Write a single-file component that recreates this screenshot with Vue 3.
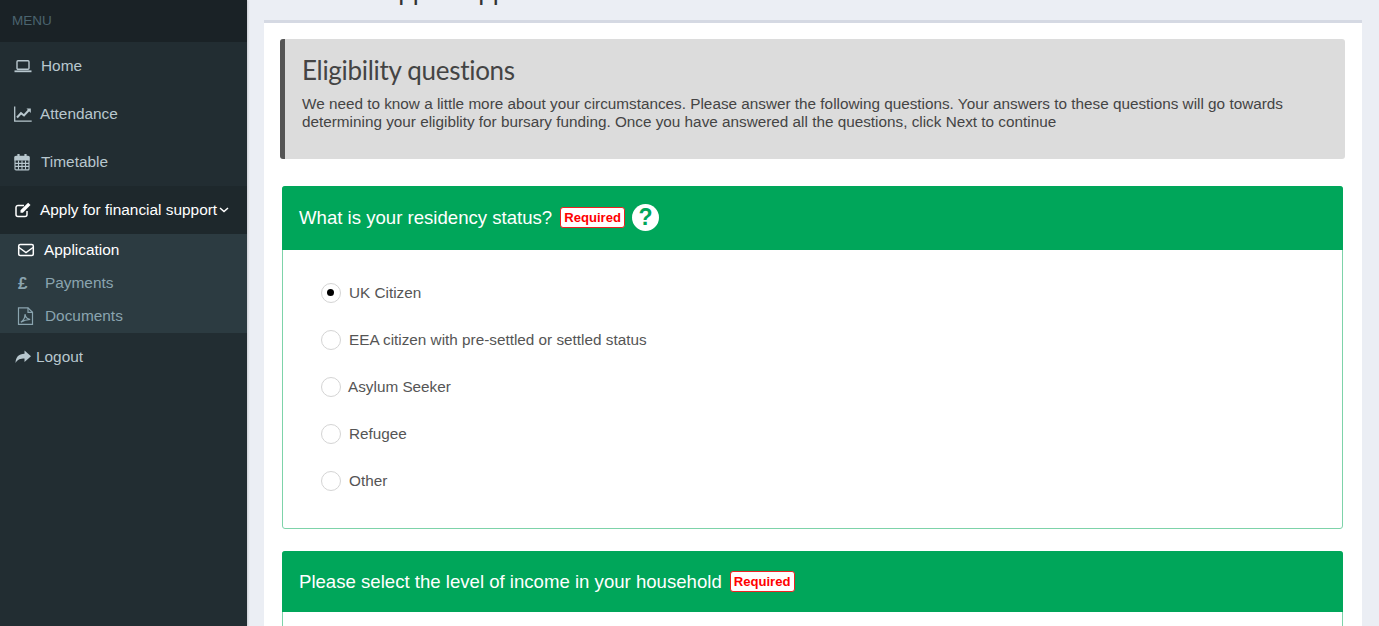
<script setup>
const menu = [
  { label: "Home", icon: "laptop" },
  { label: "Attendance", icon: "chart" },
  { label: "Timetable", icon: "calendar" },
];
const submenu = [
  { label: "Application", icon: "envelope", active: true },
  { label: "Payments", icon: "pound" },
  { label: "Documents", icon: "pdf" },
];
const options = [
  "UK Citizen",
  "EEA citizen with pre-settled or settled status",
  "Asylum Seeker",
  "Refugee",
  "Other",
];
</script>

<template>
  <div class="page">
    <aside class="sidebar">
      <div class="menu-title">MENU</div>
      <a v-for="item in menu" :key="item.label" class="item" :class="item.icon">
        <svg class="icon" viewBox="0 0 18 18">
          <g v-if="item.icon === 'laptop'" fill="none" stroke="currentColor" stroke-width="1.4">
            <rect x="3" y="3.7" width="12" height="8.6" rx="1" />
            <path d="M0.5 14.3h17" stroke-width="1.8" />
          </g>
          <g v-else-if="item.icon === 'chart'" fill="none" stroke="currentColor">
            <path d="M0.7 1.5v14.6h17" stroke-width="1.3" />
            <path d="M3 12.5l4-4.3 3 2.3 5-5.5" stroke-width="2" />
            <path d="M12.5 3.6h4.3v4.3z" fill="currentColor" stroke="none" />
          </g>
          <g v-else fill="none" stroke="currentColor" stroke-width="1.1">
            <rect x="1" y="3.4" width="14" height="13.500" rx="1" />
            <path d="M1 4h14v3H1z" fill="currentColor" />
            <path d="M1 10.400h14M1 13.400h14M4.500 7.400v9M8 7.400v9M11.500 7.400v9" />
            <path d="M4.500 1v3.500M11.500 1v3.500" stroke-width="2.200" />
          </g>
        </svg>
        <span>{{ item.label }}</span>
      </a>
      <a class="item item-open">
        <svg class="icon" viewBox="0 0 18 18">
          <path d="M13 10v3.500a2 2 0 0 1-2 2H4a2 2 0 0 1-2-2V6.500a2 2 0 0 1 2-2h6" fill="none" stroke="currentColor" stroke-width="1.500" />
          <path d="M6.500 9.300l7.600-7.600 2.400 2.400-7.600 7.600H6.500z" fill="currentColor" />
        </svg>
        <span>Apply for financial support</span>
        <svg class="chevron" viewBox="0 0 10 6">
          <path d="M1 1l4 3.600L9 1" fill="none" stroke="currentColor" stroke-width="1.500" />
        </svg>
      </a>
      <div class="submenu">
        <a v-for="sub in submenu" :key="sub.label" class="sub-item" :class="{ active: sub.active }">
          <svg class="sub-icon" viewBox="0 0 18 18">
            <g v-if="sub.icon === 'envelope'" fill="none" stroke="currentColor" stroke-width="1.500">
              <rect x="1.700" y="3.500" width="14.600" height="11" rx="1.500" />
              <path d="M2 6.500l7 5 7-5" />
            </g>
            <text v-else-if="sub.icon === 'pound'" x="1" y="15" class="pound">£</text>
            <g v-else fill="none" stroke="currentColor" stroke-width="1.200">
              <path d="M1.500 .8h9.500l4.500 4.500v12H1.500z" />
              <path d="M11 .8v4.500h4.500" />
              <path d="M3.800 15.200c2.700-1.700 4.200-4.700 4.200-8 .5 3.300 2.300 5 5.200 5.300-3.500 0-6.500 .9-9.400 2.700z" />
            </g>
          </svg>
          <span>{{ sub.label }}</span>
        </a>
      </div>
      <a class="item item-logout">
        <svg class="icon" viewBox="0 0 18 18">
          <path d="M10.500 2.500l6.500 5.700-6.500 5.700v-3.300c-4 0-7 .8-9 4.400 0-5.500 3-9 9-9.200z" fill="currentColor" />
        </svg>
        <span>Logout</span>
      </a>
    </aside>

    <main class="main">
      <div class="page-heading"><h1>Student Support Application</h1></div>
      <div class="card">
        <section class="callout">
          <h2>Eligibility questions</h2>
          <p>We need to know a little more about your circumstances. Please answer the following questions. Your answers to these questions will go towards determining your eligiblity for bursary funding. Once you have answered all the questions, click Next to continue</p>
        </section>

        <section class="panel">
          <header class="panel-head">
            <span>What is your residency status?</span>
            <span class="required">Required</span>
            <span class="help">?</span>
          </header>
          <div class="panel-body">
            <label v-for="(opt, i) in options" :key="opt" class="option" :class="{ tight: i === 2 }">
              <span class="radio" :class="{ checked: i === 0 }"></span>
              <span>{{ opt }}</span>
            </label>
          </div>
        </section>

        <section class="panel">
          <header class="panel-head short">
            <span>Please select the level of income in your household</span>
            <span class="required">Required</span>
          </header>
          <div class="panel-body"></div>
        </section>
      </div>
    </main>
  </div>
</template>

<style>
html, body {
  margin: 0;
  overflow: hidden;
}
</style>

<style scoped>
.page {
  display: flex;
  height: 626px;
  overflow: hidden;
  background: #ebeef4;
  font-family: "Liberation Sans", Arial, sans-serif;
}

.sidebar {
  flex: 0 0 247px;
  background: #222d32;
  box-shadow: 1px 0 2px rgba(0, 0, 0, 0.15);
  color: #b8c7ce;
  font-size: 15.4px;
}

.menu-title {
  height: 42px;
  padding-left: 12px;
  line-height: 42px;
  font-size: 13.5px;
  color: #4b646f;
  background: #1a2226;
}

.item {
  display: flex;
  align-items: center;
  gap: 8px;
  height: 48px;
  padding-left: 14px;
}

.item.laptop,
.item.calendar {
  gap: 9px;
}

.icon {
  flex: none;
  width: 18px;
  height: 18px;
}

.item-open {
  background: #1e282c;
  color: #fff;
}

.chevron {
  width: 10px;
  height: 6px;
  margin-left: -6px;
}

.submenu {
  background: #2c3b41;
  height: 99px;
  color: #8aa4af;
}

.sub-item {
  display: flex;
  align-items: center;
  height: 32.700px;
  gap: 10px;
  padding-left: 17px;
}

.sub-item.active {
  gap: 9px;
  color: #fff;
}

.sub-icon {
  flex: none;
  width: 18px;
  height: 18px;
}

.pound {
  font-size: 17px;
  font-weight: 700;
  fill: currentColor;
}

.item-logout {
  gap: 4px;
}

.main {
  flex: 1;
  min-width: 0;
  padding: 0 17px;
}

.page-heading {
  display: flex;
  align-items: flex-end;
  height: 20px;
  overflow: hidden;
  padding-left: 16px;
}

.page-heading h1 {
  flex: none;
  margin: 0 0 17px;
  font: 400 26px/1 Lato, sans-serif;
  word-spacing: -6px;
  color: #333;
  white-space: nowrap;
}

.card {
  height: 640px;
  box-sizing: border-box;
  padding: 16px 17px 0 16px;
  background: #fff;
  border-top: 3px solid #d5d9e3;
}

.callout {
  box-sizing: border-box;
  height: 120px;
  margin-bottom: 27px;
  padding: 14px 16px 0 17px;
  background: #dcdcdc;
  border-left: 5px solid #555;
  border-radius: 3px;
  color: #444;
}

.callout h2 {
  margin: 0 0 8px;
  font: 400 26px/34px Lato, sans-serif;
  letter-spacing: -0.3px;
  color: #444;
}

.callout p {
  margin: 0;
  font-size: 15.3px;
  line-height: 18px;
}

.panel {
  margin: 0 2px 22px;
  border: 1px solid #7dd3a9;
  border-radius: 3px;
}

.panel-head {
  display: flex;
  align-items: center;
  gap: 8px;
  box-sizing: border-box;
  height: 64px;
  margin: -1px -1px 0;
  padding: 0 0 1px 17px;
  background: #00a65a;
  color: #fff;
  font-size: 18.6px;
  border-radius: 3px 3px 0 0;
}

.panel-head.short {
  height: 61px;
  padding-bottom: 0;
}

.required {
  padding: 1px 3px;
  background: #fff;
  border: 1px solid #e22;
  border-radius: 3px;
  color: #f00;
  font-size: 13.1px;
  font-weight: 700;
  line-height: 17px;
}

.help {
  display: flex;
  align-items: center;
  justify-content: center;
  width: 27px;
  height: 27px;
  margin-left: -1px;
  border-radius: 50%;
  background: #fff;
  color: #00a65a;
  font-size: 23px;
  font-weight: 700;
}

.panel-body {
  display: flex;
  flex-direction: column;
  height: 278px;
  padding-top: 19px;
  box-sizing: border-box;
}

.option {
  display: flex;
  align-items: center;
  gap: 8px;
  height: 47px;
  padding-left: 38px;
  color: #555;
  font-size: 15.3px;
}

.option.tight {
  gap: 7px;
}

.radio {
  position: relative;
  box-sizing: border-box;
  width: 20px;
  height: 20px;
  border: 1.500px solid #d4d4d4;
  border-radius: 50%;
  background: #fff;
}

.radio.checked::after {
  content: "";
  position: absolute;
  left: 5px;
  top: 5px;
  width: 7px;
  height: 7px;
  border-radius: 50%;
  background: #000;
}
</style>
